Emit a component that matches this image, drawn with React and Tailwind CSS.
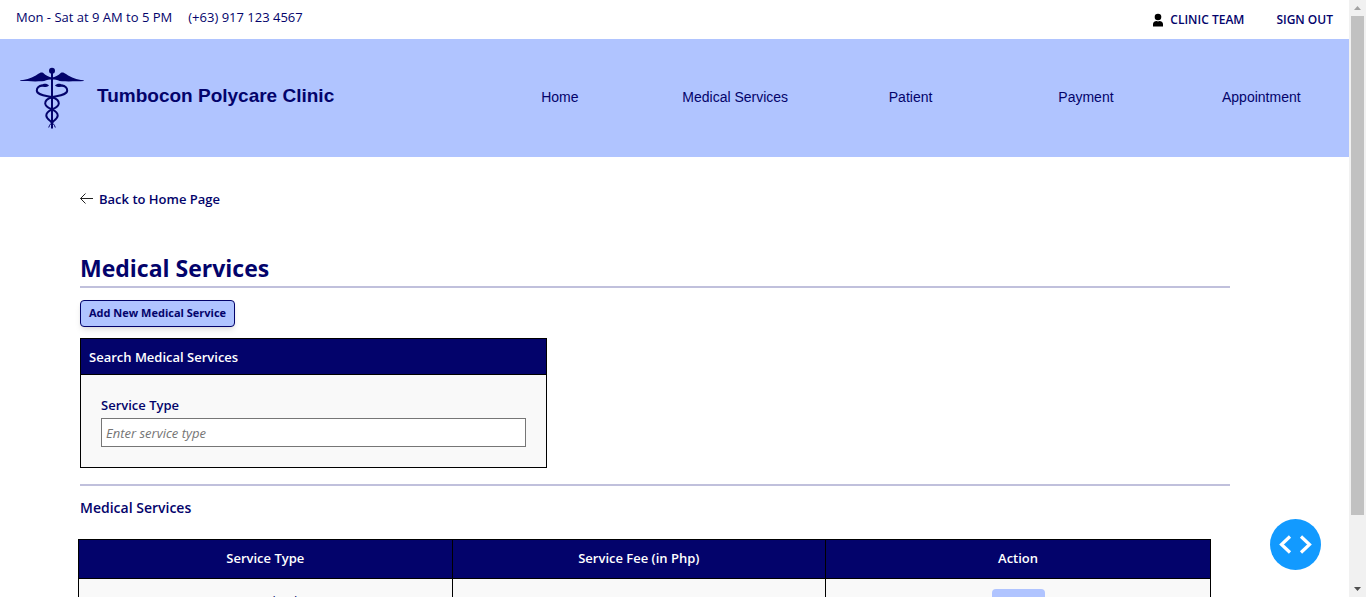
import React from "react";

const NAV = ["Home", "Medical Services", "Patient", "Payment", "Appointment"];

function Caduceus() {
  return (
    <svg viewBox="0 0 64 64" className="h-16 w-16 shrink-0" fill="none" stroke="#03036b" aria-hidden="true">
      <circle cx="32" cy="4.800" r="3" fill="#03036b" stroke="none" />
      <path d="M32 7V62.500" strokeWidth="2" />
      <path
        d="M32 11.500C29 11.500 26 9.500 23 6.800C21.500 6 20 6.500 18 8C12 12 8 13.300 0.300 14.300V15C6 15.300 14 15.500 22 15.300C26 15 28 12.800 32 13.800C36 12.800 38 15 42 15.300C50 15.500 58 15.300 63.700 15V14.300C56 13.300 52 12 46 8C44 6.500 42.500 6 41 6.800C38 9.500 35 11.500 32 11.500Z"
        fill="#03036b"
        stroke="none"
      />
      <path d="M22.500 19.300C19 20 16.800 22 16.800 24.500C16.800 29 25 29.500 32 31.200C36.500 32.500 39 34.500 38.800 37.500C38.500 41 35 42 32 43.300C28.500 44.800 26.300 46.800 26.300 49.500C26.300 53 30 54 33 57.500" strokeWidth="2" />
      <path d="M41.500 19.300C45 20 47.200 22 47.200 24.500C47.200 29 39 29.500 32 31.200C27.500 32.500 25 34.500 25.200 37.500C25.500 41 29 42 32 43.300C35.500 44.800 37.700 46.800 37.700 49.500C37.700 53 34 54 31 57.500" strokeWidth="2" />
      <path
        d="M21 19.500C23 17 27 17 29 19.500C27 21.300 24 21.300 21 20.500ZM43 19.500C41 17 37 17 35 19.500C37 21.300 40 21.300 43 20.500Z"
        fill="#03036b"
        stroke="none"
      />
      <path d="M31 57.500C30 58.500 29 60 28.700 61.500M33 57.500C34 58.500 35 60 35.300 61.500" strokeWidth="1" />
    </svg>
  );
}

function TopBar() {
  return (
    <div className="flex h-[39px] items-center justify-between px-4 text-[13px]">
      <div className="flex gap-4 pb-1">
        <span>Mon - Sat at 9 AM to 5 PM</span>
        <span>(+63) 917 123 4567</span>
      </div>
      <div className="flex gap-8 text-xs font-semibold">
        <a href="#team" className="flex items-center gap-1.5">
          <svg viewBox="0 0 12 14" className="h-3.5 w-3" fill="#000" aria-hidden="true">
            <circle cx="6" cy="4" r="3.300" />
            <path d="M1 13.500V11C1 9 3 8 4.500 8C5.500 8.500 6.500 8.500 7.500 8C9 8 11 9 11 11V13.500Z" />
          </svg>
          CLINIC TEAM
        </a>
        <a href="#signout">SIGN OUT</a>
      </div>
    </div>
  );
}

function Header() {
  return (
    <header className="flex h-[118px] items-center justify-between bg-[#b0c4ff] font-['Liberation_Sans',Arial,sans-serif]">
      <a href="#home" className="flex items-center gap-[13px] pl-5 text-[19px] font-bold">
        <Caduceus />
        <span className="pb-1">Tumbocon Polycare Clinic</span>
      </a>
      <nav className="grid w-[65%] grid-cols-5 pb-0.5 text-center text-sm">
        {NAV.map((item) => (
          <a key={item} href="#nav">{item}</a>
        ))}
      </nav>
    </header>
  );
}

function SearchPanel() {
  return (
    <section className="mt-[11px] w-[467px] max-w-full border border-black bg-[#f9f9f9]">
      <h2 className="h-9 border-b border-black bg-[#03036b] px-2 text-[13px] leading-9 font-semibold text-white">
        Search Medical Services
      </h2>
      <div className="p-5">
        <label htmlFor="service-type" className="block text-[13px] leading-5 font-semibold">Service Type</label>
        <input
          id="service-type"
          type="text"
          placeholder="Enter service type"
          className="mt-[3px] block h-[29px] w-full border border-[#767676] bg-white px-1 text-[13px] placeholder:text-[#757575] placeholder:italic"
        />
      </div>
    </section>
  );
}

function ServicesTable() {
  return (
    <table className="-ml-0.5 w-[1133px] table-fixed border-collapse text-center text-[13px]">
      <colgroup>
        <col className="w-[33%]" />
        <col className="w-[33%]" />
        <col className="w-[34%]" />
      </colgroup>
      <thead>
        <tr className="h-[39px] bg-[#03036b] text-white">
          <th className="border border-black font-semibold">Service Type</th>
          <th className="border border-black font-semibold">Service Fee (in Php)</th>
          <th className="border border-black font-semibold">Action</th>
        </tr>
      </thead>
      <tbody>
        <tr className="h-12 bg-[#f9f9f9] align-top">
          <td className="border border-black pt-3 leading-5">Basic Check</td>
          <td className="border border-black" />
          <td className="border border-black pt-2.5">
            <button type="button" aria-label="Edit" className="h-7 w-[53px] rounded bg-[#b0c4ff]" />
          </td>
        </tr>
      </tbody>
    </table>
  );
}

function ScrollBar() {
  return (
    <div className="flex w-[17px] shrink-0 flex-col items-center bg-[#f1f1f1]" aria-hidden="true">
      <svg viewBox="0 0 17 16" className="h-4 w-[17px]" fill="#a3a3a3"><path d="M5 10H12L8.500 6Z" /></svg>
      <div className="w-[13px] flex-[499] bg-[#c1c1c1]" />
      <div className="flex-[65]" />
      <svg viewBox="0 0 17 17" className="h-[17px] w-[17px]" fill="#505050"><path d="M5 7H12L8.500 11Z" /></svg>
    </div>
  );
}

export default function App() {
  return (
    <div className="flex h-screen overflow-hidden bg-white font-['Open_Sans','Noto_Sans',sans-serif] text-[#03036b]">
      <div className="min-w-0 flex-1 overflow-hidden">
        <TopBar />
        <Header />
        <main className="mr-[119px] ml-20 pt-8">
          <a href="#home" className="flex w-fit items-center gap-[5px] text-[13px] leading-5 font-semibold">
            <svg viewBox="0 0 14 12" className="h-3 w-3.5" fill="none" stroke="#222" aria-hidden="true">
              <path d="M13 5.500H0.500M5.500 0.500L0.500 5.500L5.500 10.500" />
            </svg>
            Back to Home Page
          </a>
          <h1 className="mt-[43px] border-b-2 border-[#c0c0dc] pb-0.5 text-[23px] leading-8 font-bold">Medical Services</h1>
          <button
            type="button"
            className="mt-3 block h-[27px] rounded border border-[#03036b] bg-[#b0c4ff] px-2 text-[11px] font-bold shadow-md"
          >
            Add New Medical Service
          </button>
          <SearchPanel />
          <hr className="mt-4 border-t-2 border-[#c0c0dc]" />
          <h2 className="mt-3 mb-[21px] text-sm leading-5 font-semibold">Medical Services</h2>
          <ServicesTable />
        </main>
      </div>
      <button
        type="button"
        aria-label="Toggle code"
        className="fixed right-[45px] bottom-[27px] flex h-[51px] w-[51px] items-center justify-center rounded-full bg-[#129aff]"
      >
        <svg viewBox="0 0 33 19" className="h-[19px] w-[33px]" fill="none" stroke="#fff" strokeWidth="3.200" aria-hidden="true">
          <path d="M11 1.500L2.500 9.500L11 17.500M22 1.500L30.500 9.500L22 17.500" />
        </svg>
      </button>
      <ScrollBar />
    </div>
  );
}
